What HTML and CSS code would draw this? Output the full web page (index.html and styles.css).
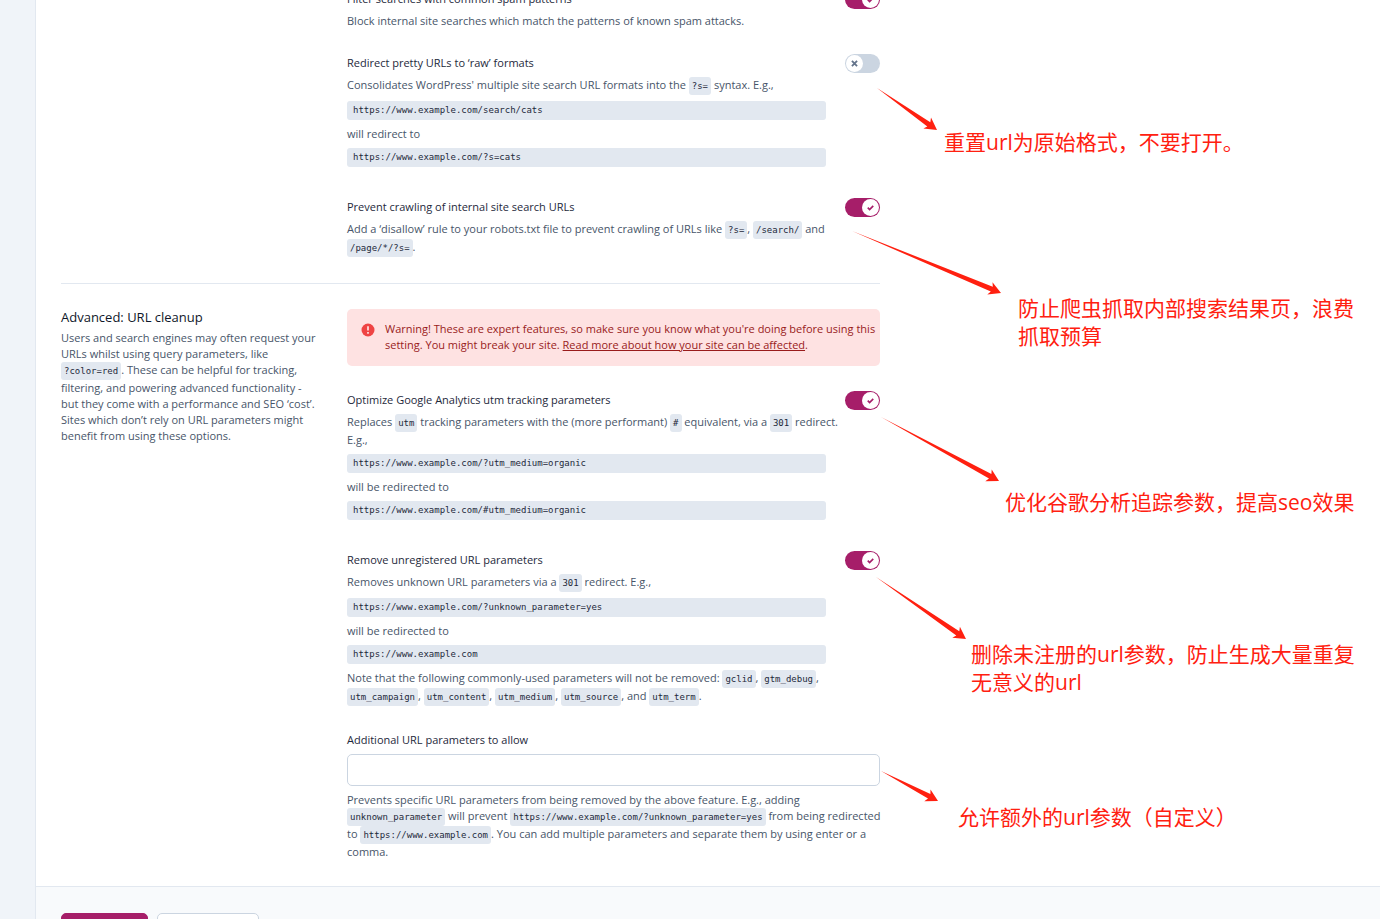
FILE: index.html
```html
<!DOCTYPE html>
<html lang="en">
<head>
  <meta charset="UTF-8" />
  <meta name="viewport" content="width=device-width, initial-scale=1.0" />
  <title>Crawl optimization</title>
  <link rel="stylesheet" href="styles.css">
</head>
<body>
  <svg class="sprite" width="0" height="0" aria-hidden="true">
    <symbol id="check" viewBox="0 0 12 12"><path d="M3 6.2l2 2 4-4" fill="none" stroke="#a61e69" stroke-width="1.8"/></symbol>
    <symbol id="cross" viewBox="0 0 12 12"><path d="M3.2 3.2l5.6 5.6M8.8 3.2l-5.6 5.6" fill="none" stroke="#64748b" stroke-width="2"/></symbol>
  </svg>
  <main class="page">
    <div class="content">
      <section class="section">
        <div class="intro"></div>
        <div class="features">
          <div class="feature">
            <div class="feature-text">
              <label class="title" for="spam">Filter searches with common spam patterns</label>
              <p>Block internal site searches which match the patterns of known spam attacks.</p>
            </div>
            <span class="toggle"><input type="checkbox" id="spam" checked /><svg><use href="#check"/></svg></span>
          </div>
          <div class="feature">
            <div class="feature-text">
              <label class="title" for="pretty">Redirect pretty URLs to ‘raw’ formats</label>
              <p>Consolidates WordPress' multiple site search URL formats into the <code>?s=</code> syntax. E.g.,</p>
              <code class="block">https://www.example.com/search/cats</code>
              <p>will redirect to</p>
              <code class="block">https://www.example.com/?s=cats</code>
            </div>
            <span class="toggle"><input type="checkbox" id="pretty" /><svg><use href="#cross"/></svg></span>
          </div>
          <div class="feature">
            <div class="feature-text">
              <label class="title" for="crawl">Prevent crawling of internal site search URLs</label>
              <p>Add a ‘disallow’ rule to your robots.txt file to prevent crawling of URLs like <code>?s=</code>, <code>/search/</code> and <code>/page/*/?s=</code>.</p>
            </div>
            <span class="toggle"><input type="checkbox" id="crawl" checked /><svg><use href="#check"/></svg></span>
          </div>
        </div>
      </section>

      <section class="section">
        <div class="intro">
          <h2>Advanced: URL cleanup</h2>
          <p>Users and search engines may often request your URLs whilst using query parameters, like <code>?color=red</code>. These can be helpful for tracking, filtering, and powering advanced functionality - but they come with a performance and SEO ‘cost’. Sites which don’t rely on URL parameters might benefit from using these options.</p>
        </div>
        <div class="features">
          <div class="alert">
            <svg class="alert-icon" viewBox="0 0 14 14" aria-hidden="true"><circle cx="7" cy="7" r="6.5" fill="#ef4444"/><path d="M7 3.2v4.4M7 9.1v1.7" stroke="#fee2e2" stroke-width="1.7"/></svg>
            <p>Warning! These are expert features, so make sure you know what you're doing before using this setting. You might break your site. <a href="#">Read more about how your site can be affected</a>.</p>
          </div>
          <div class="feature">
            <div class="feature-text">
              <label class="title" for="utm">Optimize Google Analytics utm tracking parameters</label>
              <p>Replaces <code>utm</code> tracking parameters with the (more performant) <code>#</code> equivalent, via a <code>301</code> redirect. E.g.,</p>
              <code class="block">https://www.example.com/?utm_medium=organic</code>
              <p>will be redirected to</p>
              <code class="block">https://www.example.com/#utm_medium=organic</code>
            </div>
            <span class="toggle"><input type="checkbox" id="utm" checked /><svg><use href="#check"/></svg></span>
          </div>
          <div class="feature">
            <div class="feature-text">
              <label class="title" for="unregistered">Remove unregistered URL parameters</label>
              <p>Removes unknown URL parameters via a <code>301</code> redirect. E.g.,</p>
              <code class="block">https://www.example.com/?unknown_parameter=yes</code>
              <p>will be redirected to</p>
              <code class="block">https://www.example.com</code>
              <p>Note that the following commonly-used parameters will not be removed: <code>gclid</code>, <code>gtm_debug</code>, <code>utm_campaign</code>, <code>utm_content</code>, <code>utm_medium</code>, <code>utm_source</code>, and <code>utm_term</code>.</p>
            </div>
            <span class="toggle"><input type="checkbox" id="unregistered" checked /><svg><use href="#check"/></svg></span>
          </div>
          <div class="field">
            <label class="title" for="allow">Additional URL parameters to allow</label>
            <input type="text" id="allow" />
            <p>Prevents specific URL parameters from being removed by the above feature. E.g., adding <code>unknown_parameter</code> will prevent <code>https://www.example.com/?unknown_parameter=yes</code> from being redirected to <code>https://www.example.com</code>. You can add multiple parameters and separate them by using enter or a comma.</p>
          </div>
        </div>
      </section>
    </div>
    <footer class="actions">
      <button class="save">Save changes</button>
      <button class="discard">Discard changes</button>
    </footer>
  </main>

  <!-- notes drawn over the settings -->
  <div class="notes" lang="zh-CN">
    <svg class="arrows" aria-hidden="true">
      <path d="M877 88L927.3 126.4 923.4 128.6 937 130 931 117.6 930.3 122.2z"/>
      <path d="M852 231L990.8 291.6 987.3 294.6 1001 293 992.5 282.2 992.8 286.8z"/>
      <path d="M881 417L989 478.5 985.3 481.2 999 481 991.7 469.4 991.4 473.9z"/>
      <path d="M876 577L956.3 635.4 952.3 637.7 966 639 959.9 626.7 959.3 631.2z"/>
      <path d="M881 771L928 798.6 924.3 801.3 938 801 930.5 789.5 930.4 794z"/>
    </svg>
    <p class="note note-pretty">重置url为原始格式，不要打开。</p>
    <p class="note note-crawl">防止爬虫抓取内部搜索结果页，浪费<br />抓取预算</p>
    <p class="note note-utm">优化谷歌分析追踪参数，提高seo效果</p>
    <p class="note note-unregistered">删除未注册的url参数，防止生成大量重复<br />无意义的url</p>
    <p class="note note-allow">允许额外的url参数（自定义）</p>
  </div>
</body>
</html>
```
FILE: styles.css
```css
* {
  box-sizing: border-box;
}
body {
  margin: 0;
  height: 100vh;
  overflow: hidden;
  position: relative;
  padding-left: 35px;
  background: #f0f4f9;
  color: #475569;
  font-family: "Open Sans", "Noto Sans CJK SC", sans-serif;
  font-size: 11px;
  line-height: 16px;
}
p {
  margin: 0;
}
.sprite {
  position: absolute;
}
.page {
  min-height: 100vh;
  border-left: 1px solid #e2e8f0;
  background: #fff;
}
/* the list is scrolled, the first row is partly out of view */
.content {
  max-width: 869px;
  padding: 0 25px;
  margin-top: -10px;
}
.section {
  display: grid;
  grid-template-columns: 260px 1fr;
  gap: 26px;
  padding-bottom: 26px;
}
.section + .section {
  border-top: 1px solid #e2e8f0;
  padding-top: 25px;
}
.features {
  display: flex;
  flex-direction: column;
  gap: 25px;
}
.feature {
  display: flex;
  justify-content: space-between;
  gap: 5px;
}
.feature-text {
  flex: 1;
}
.title {
  display: block;
  color: #1e293b;
  line-height: 18px;
  margin-bottom: 5px;
}
h2 {
  margin: 0 0 4px;
  color: #0f172a;
  font-size: 13px;
  font-weight: 400;
  line-height: 17px;
}
code {
  display: inline-block;
  padding: 1px 3px;
  border-radius: 3px;
  background: #e2e8f0;
  color: #1e293b;
  font-family: "DejaVu Sans Mono", monospace;
  font-size: 9px;
  line-height: 16px;
}
.block {
  display: block;
  padding: 0 6px;
  margin: 6px 14px 6px 0;
  line-height: 19px;
}
.toggle {
  position: relative;
  width: 35px;
  height: 19px;
}
.toggle input {
  appearance: none;
  display: block;
  width: 35px;
  height: 19px;
  margin: 0;
  padding: 1px;
  border-radius: 10px;
  background: #cbd5e1;
}
.toggle input::before {
  content: "";
  display: block;
  width: 17px;
  height: 17px;
  border-radius: 50%;
  background: #fff;
}
.toggle input:checked {
  background: #a61e69;
}
.toggle input:checked::before {
  margin-left: auto;
}
.toggle svg {
  position: absolute;
  top: 4px;
  left: 4px;
  width: 11px;
  height: 11px;
  pointer-events: none;
}
.toggle input:checked + svg {
  left: 20px;
}
.alert {
  display: flex;
  gap: 10px;
  padding: 12px 4px 13px 14px;
  border-radius: 5px;
  background: #fee2e2;
  color: #991b1b;
}
.alert-icon {
  flex: none;
  width: 14px;
  height: 14px;
  margin-top: 2px;
}
.alert a {
  color: inherit;
}
.field input {
  display: block;
  width: 100%;
  height: 32px;
  margin: 5px 0 6px;
  padding: 0 8px;
  border: 1px solid #cbd5e1;
  border-radius: 5px;
  font: inherit;
}
.field p {
  margin-right: -8px;
}
.actions {
  display: flex;
  gap: 9px;
  padding: 26px 25px;
  border-top: 1px solid #e2e8f0;
  background: #f8fafc;
}
.actions button {
  height: 30px;
  padding: 0 8px;
  border: 1px solid #cbd5e1;
  border-radius: 5px;
  background: #fff;
  color: #1e293b;
  font: inherit;
}
.actions .save {
  border-color: #a61e69;
  background: #a61e69;
  color: #fff;
}
.arrows {
  position: absolute;
  top: 0;
  left: 0;
  width: 100%;
  height: 100%;
  fill: #ff2010;
  pointer-events: none;
}
.note {
  position: absolute;
  color: #ff2010;
  font-size: 21px;
  line-height: 28px;
  white-space: nowrap;
}
.note-pretty {
  top: 128px;
  left: 944px;
}
.note-crawl {
  top: 294px;
  left: 1018px;
}
.note-utm {
  top: 488px;
  left: 1005px;
}
.note-unregistered {
  top: 640px;
  left: 971px;
}
.note-allow {
  top: 803px;
  left: 958px;
}
```
